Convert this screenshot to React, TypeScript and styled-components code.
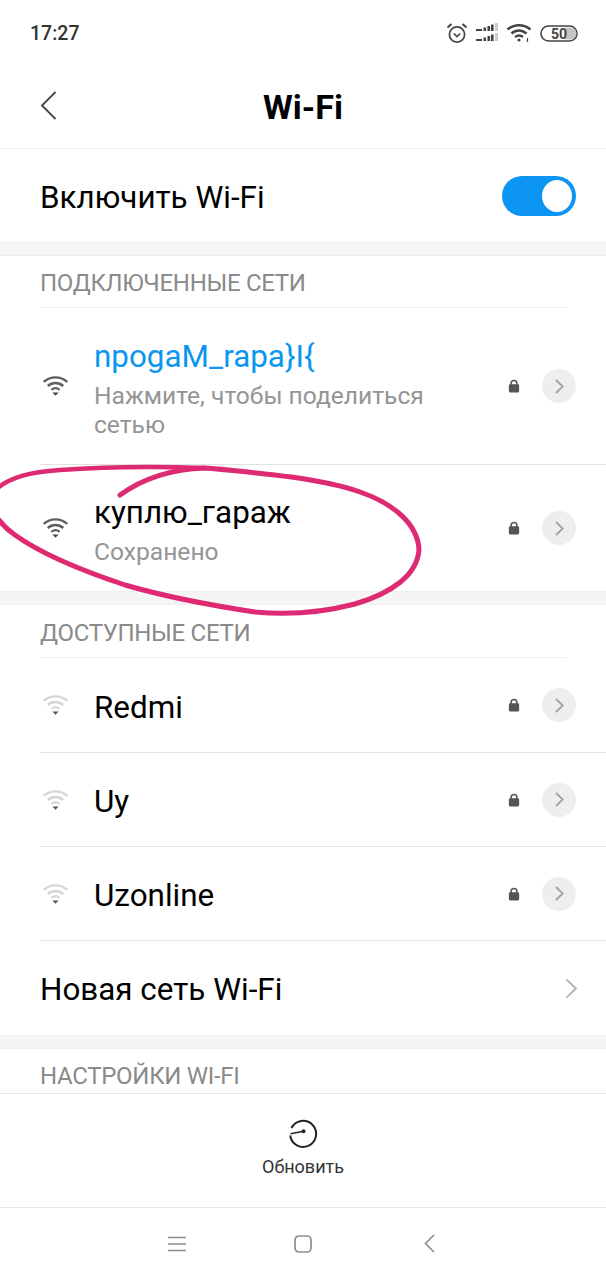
import React from 'react';
import styled, { createGlobalStyle } from 'styled-components';

const GlobalStyle = createGlobalStyle`
  html, body {
    margin: 0;
    padding: 0;
    background: #fff;
  }
  * {
    box-sizing: border-box;
  }
`;

const Screen = styled.div`
  position: relative;
  width: 606px;
  height: 1280px;
  overflow: hidden;
  display: flex;
  flex-direction: column;
  background: #fff;
  font-family: Roboto, "Liberation Sans", sans-serif;
  color: #000;
`;

const StatusBar = styled.div`
  height: 62px;
  flex: none;
  display: flex;
  align-items: center;
  justify-content: space-between;
  padding: 4px 28px 0 30px;
`;

const Clock = styled.span`
  font-size: 19.5px;
  font-weight: 500;
  color: #333;
`;

const StatusIcons = styled.div`
  display: flex;
  align-items: center;
  gap: 7px;
`;

const Header = styled.header`
  height: 87px;
  flex: none;
  display: flex;
  align-items: center;
  justify-content: center;
  position: relative;
  border-bottom: 1px solid #f0f0f0;
`;

const BackButton = styled.div`
  position: absolute;
  left: 40px;
  top: 29px;
  display: flex;
`;

const Title = styled.h1`
  margin: 3px 0 0;
  font-size: 34px;
  font-weight: 700;
`;

const ToggleRow = styled.div`
  height: 93px;
  flex: none;
  display: flex;
  align-items: center;
  justify-content: space-between;
  padding: 0 30px 0 40px;
`;

const RowLabel = styled.span`
  font-size: 31.4px;
  line-height: 36px;
  padding-top: 4px;
`;

const Switch = styled.div`
  width: 74px;
  height: 40px;
  border-radius: 20px;
  background: #0d95f3;
  display: flex;
  justify-content: flex-end;
  align-items: center;
  padding-right: 4px;
`;

const Knob = styled.div`
  width: 30px;
  height: 32px;
  border-radius: 50%;
  background: #fff;
`;

const Gap = styled.div`
  height: 14px;
  flex: none;
  background: #f5f5f5;
  border-top: 1px solid #eee;
  border-bottom: 1px solid #eee;
`;

const SectionHeader = styled.div<{ $height: number; $bare?: boolean }>`
  height: ${(p) => p.$height}px;
  flex: none;
  margin: 0 40px;
  padding-top: ${(p) => (p.$bare ? 10 : 3)}px;
  display: flex;
  align-items: center;
  font-size: 24px;
  letter-spacing: -0.3px;
  color: #8a8a8a;
  text-transform: uppercase;
  border-bottom: ${(p) => (p.$bare ? 'none' : '1px solid #eee')};
`;

const Row = styled.div<{ $height: number; $last?: boolean }>`
  height: ${(p) => p.$height}px;
  flex: none;
  margin-left: 40px;
  padding-right: 30px;
  display: flex;
  align-items: center;
  border-bottom: ${(p) => (p.$last ? 'none' : '1px solid #e2e2e2')};
`;

const SignalSlot = styled.div`
  width: 54px;
  flex: none;
  display: flex;
  padding-left: 2px;
`;

const RowText = styled.div`
  flex: 1;
  min-width: 0;
  padding-top: 5px;
`;

const NetworkName = styled.div<{ $active?: boolean }>`
  font-size: 31.4px;
  line-height: 36px;
  color: ${(p) => (p.$active ? '#0b96f0' : '#000')};
`;

const NetworkNote = styled.div`
  font-size: 24.6px;
  line-height: 29px;
  margin-top: 6px;
  color: #959595;
  max-width: 350px;
`;

const LockSlot = styled.div`
  display: flex;
  margin-right: 22px;
`;

const DetailButton = styled.div`
  width: 34px;
  height: 34px;
  border-radius: 50%;
  background: #eeeeee;
  display: flex;
  align-items: center;
  justify-content: center;
`;

const PlainChevron = styled.div`
  width: 34px;
  margin-right: -2px;
  display: flex;
  justify-content: flex-end;
`;

const Spacer = styled.div`
  flex: 1;
`;

const ActionBar = styled.div`
  height: 115px;
  flex: none;
  border-top: 1px solid #e6e6e6;
  border-bottom: 1px solid #e6e6e6;
  display: flex;
  flex-direction: column;
  align-items: center;
  padding-top: 24px;
  background: #fff;
`;

const ActionLabel = styled.span`
  margin-top: 8px;
  font-size: 18px;
  line-height: 22px;
  color: #333;
`;

const NavBar = styled.nav`
  height: 73px;
  flex: none;
  display: grid;
  grid-template-columns: repeat(3, 126px);
  justify-content: center;
  align-items: center;
  justify-items: center;
  padding-bottom: 2px;
`;

const InkLayer = styled.svg`
  position: absolute;
  left: 0;
  top: 0;
  pointer-events: none;
`;

const WifiIcon: React.FC<{ dim?: boolean }> = ({ dim }) => {
  const outer = dim ? '#d6d6d6' : '#5e5e5e';
  return (
    <svg width="27" height="20" viewBox="1.5 1 27 22" fill="none">
      <path d="M2 7.5C9.5 .8 20.5 .8 28 7.5" stroke={outer} strokeWidth="2.6" />
      <path d="M6.5 12C11.5 7.6 18.5 7.6 23.5 12" stroke={outer} strokeWidth="2.6" />
      <path d="M10.5 16.2C13.2 14 16.8 14 19.5 16.2" stroke={outer} strokeWidth="2.4" />
      <path d="M11.6 19.2h6.8L15 22.8z" fill={dim ? '#555' : '#444'} />
    </svg>
  );
};

const LockIcon = () => (
  <svg width="12" height="14" viewBox="0 0 14 16">
    <path d="M3.6 7V5a3.4 3.4 0 0 1 6.8 0v2" fill="none" stroke="#555" strokeWidth="1.8" />
    <rect x="1" y="6" width="12" height="9.5" rx="1.6" fill="#555" />
  </svg>
);

const Chevron: React.FC<{ size?: number; color?: string; weight?: number }> = ({
  size = 15,
  color = '#a0a0a0',
  weight = 1.8,
}) => (
  <svg width={size * 0.6} height={size} viewBox="0 0 9 15" fill="none">
    <path d="M1 1l6.8 6.5L1 14" stroke={color} strokeWidth={weight} />
  </svg>
);

const NetworkRow: React.FC<{
  name: string;
  note?: string;
  active?: boolean;
  dim?: boolean;
  height: number;
  last?: boolean;
}> = ({ name, note, active, dim, height, last }) => (
  <Row $height={height} $last={last}>
    <SignalSlot>
      <WifiIcon dim={dim} />
    </SignalSlot>
    <RowText>
      <NetworkName $active={active}>{name}</NetworkName>
      {note && <NetworkNote>{note}</NetworkNote>}
    </RowText>
    <LockSlot>
      <LockIcon />
    </LockSlot>
    <DetailButton>
      <Chevron />
    </DetailButton>
  </Row>
);

const App: React.FC = () => {
  return (
    <Screen>
      <GlobalStyle />
      <StatusBar>
        <Clock>17:27</Clock>
        <StatusIcons>
          <svg width="22" height="22" viewBox="0 0 22 22" fill="none" stroke="#444" strokeWidth="1.7">
            <circle cx="11" cy="12.5" r="7.6" />
            <path d="M7.8 11.5l3.2 3 3.2-3" />
            <path d="M1.5 5.5L5.5 2M20.5 5.5L16.5 2" strokeWidth="2" />
          </svg>
          <svg width="24" height="20" viewBox="0 0 24 20" fill="#444">
            <rect x="1" y="6" width="6" height="2" />
            <rect x="8.5" y="4.5" width="2.6" height="3.5" />
            <rect x="12.5" y="3" width="2.6" height="5" />
            <rect x="16" y="1.5" width="2.6" height="6.5" />
            <rect x="20" y="0" width="3" height="8" fill="#ccc" />
            <rect x="1" y="16" width="6" height="2" />
            <rect x="8.5" y="14.5" width="2.6" height="3.5" />
            <rect x="12.5" y="13" width="2.6" height="5" />
            <rect x="16" y="11.5" width="2.6" height="6.5" />
            <rect x="20" y="10" width="3" height="8" fill="#ccc" />
          </svg>
          <svg width="27" height="20" viewBox="0 0 27 20" fill="none" stroke="#444" strokeWidth="2.4">
            <path d="M1.5 6.5C8 .8 18 .8 24.5 6.5" />
            <path d="M5.5 10.5C10 6.5 16 6.5 20.5 10.5" />
            <path d="M9 14C11.5 12 14.5 12 17 14" />
            <circle cx="13" cy="17" r="1.6" fill="#444" stroke="none" />
            <path d="M21.5 15v4" strokeWidth="1.2" />
          </svg>
          <svg width="38" height="17" viewBox="0 0 38 17">
            <rect x="1" y="1" width="36" height="15" rx="7.5" fill="#fff" stroke="#444" strokeWidth="1.6" />
            <path d="M25 2.5h5.5a6 6 0 0 1 0 12H25z" fill="#c4c4c4" />
            <text x="19" y="13.5" textAnchor="middle" fontFamily="Roboto, sans-serif" fontSize="14" fontWeight="700" fill="#444">
              50
            </text>
          </svg>
        </StatusIcons>
      </StatusBar>

      <Header>
        <BackButton>
          <svg width="17" height="29" viewBox="0 0 17 29" fill="none">
            <path d="M15.5 1L2 14.5 15.5 28" stroke="#444" strokeWidth="1.8" />
          </svg>
        </BackButton>
        <Title>Wi-Fi</Title>
      </Header>

      <ToggleRow>
        <RowLabel>Включить Wi-Fi</RowLabel>
        <Switch>
          <Knob />
        </Switch>
      </ToggleRow>
      <Gap />

      <SectionHeader $height={52}>Подключенные сети</SectionHeader>
      <NetworkRow name="npogaM_rapa}I{" note="Нажмите, чтобы поделиться сетью" active height={157} />
      <NetworkRow name="куплю_гараж" note="Сохранено" height={126} last />
      <Gap />

      <SectionHeader $height={53}>Доступные сети</SectionHeader>
      <NetworkRow name="Redmi" dim height={95} />
      <NetworkRow name="Uy" dim height={94} />
      <NetworkRow name="Uzonline" dim height={94} />
      <Row $height={94} $last>
        <RowLabel>Новая сеть Wi-Fi</RowLabel>
        <Spacer />
        <PlainChevron>
          <Chevron size={21} color="#b4b4b4" weight={1.4} />
        </PlainChevron>
      </Row>
      <Gap />

      <SectionHeader $height={44} $bare>Настройки Wi-Fi</SectionHeader>

      <ActionBar>
        <svg width="30" height="30" viewBox="0 0 30 30" fill="none" stroke="#222" strokeWidth="2">
          <path d="M3.5 10A13 13 0 1 1 2.2 17.5" />
          <path d="M2.6 15.8L15.5 13.2" strokeWidth="1.6" />
          <circle cx="15.5" cy="13.2" r="2" fill="#222" stroke="none" />
        </svg>
        <ActionLabel>Обновить</ActionLabel>
      </ActionBar>

      <NavBar>
        <svg width="18" height="16" viewBox="0 0 18 16" stroke="#8c8c8c" strokeWidth="1.6">
          <path d="M0 1.5h18M0 8h18M0 14.5h18" />
        </svg>
        <svg width="18" height="18" viewBox="0 0 18 18" fill="none" stroke="#8c8c8c" strokeWidth="1.7">
          <rect x="1" y="1" width="16" height="16" rx="4" />
        </svg>
        <svg width="11" height="19" viewBox="0 0 11 19" fill="none" stroke="#8c8c8c" strokeWidth="1.6">
          <path d="M10 1L1.5 9.5 10 18" />
        </svg>
      </NavBar>

      <InkLayer width="606" height="1280" viewBox="0 0 606 1280" fill="none">
        <path
          d="M120 495C145 477 175 469 205 468C260 473 320 478 360 492C395 504 418 525 419 550C417 575 392 593 355 604C320 613 285 615 255 612C215 606 170 598 125 585C80 570 40 553 15 535C5 528 0 522 -5 515"
          stroke="#dd2a73"
          strokeWidth="5"
          strokeLinecap="round"
        />
        <path
          d="M-5 490C10 477 30 472 60 470C100 467 150 466 205 468"
          stroke="#dd2a73"
          strokeWidth="4.5"
          strokeLinecap="round"
        />
      </InkLayer>
    </Screen>
  );
};

export default App;
